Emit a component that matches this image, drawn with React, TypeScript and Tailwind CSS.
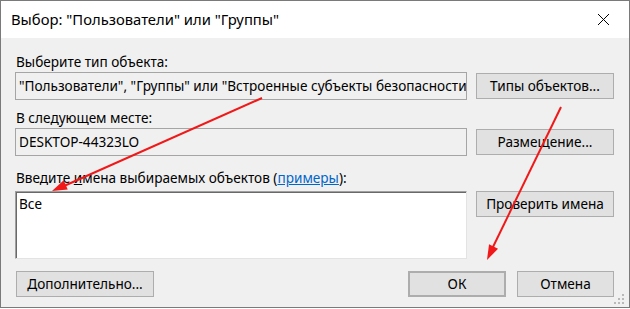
import React from "react";

function arrowHead(x1: number, y1: number, x2: number, y2: number, len = 15, half = 5) {
  const dx = x2 - x1;
  const dy = y2 - y1;
  const d = Math.hypot(dx, dy);
  const ux = dx / d;
  const uy = dy / d;
  const bx = x2 - ux * len;
  const by = y2 - uy * len;
  const px = -uy * half;
  const py = ux * half;
  return `${x2},${y2} ${bx + px},${by + py} ${bx - px},${by - py}`;
}

function Btn({ children, className = "" }: { children: React.ReactNode; className?: string }) {
  return (
    <div
      className={
        "h-[26px] flex items-center justify-center bg-[#e1e1e1] border border-[#adadad] text-[13.6px] text-black leading-none " +
        className
      }
    >
      {children}
    </div>
  );
}

export default function App() {
  const a1 = { x1: 262, y1: 98, x2: 52, y2: 191 };
  const a2 = { x1: 561, y1: 107, x2: 487, y2: 260 };
  return (
    <div className="relative w-[630px] h-[309px] bg-white overflow-hidden font-['Noto_Sans',sans-serif]">
      <div className="relative w-[630px] h-[308px] border border-[#7a7a7a] bg-[#f0f0f0] flex flex-col">
        {/* title bar */}
        <div className="h-[37px] bg-white flex items-center pl-[10px] relative">
          <span className="text-[14.8px] text-black">Выбор: "Пользователи" или "Группы"</span>
          <svg className="absolute left-[596px] top-[12px]" width="13" height="13" viewBox="0 0 13 13">
            <path d="M1 1 L12 12 M12 1 L1 12" stroke="#000" strokeWidth="1" fill="none" />
          </svg>
        </div>
        {/* body */}
        <div className="flex flex-col pl-[14px] pr-[15px] text-[13.6px] text-black">
          <div className="mt-[14px] h-[20px] leading-[20px] pl-[1px]">Выберите тип объекта:</div>
          <div className="flex items-start">
            <div className="w-[452px] h-[28px] border border-[#a5a5a5] flex items-center pl-[3px] overflow-hidden whitespace-nowrap">
              "Пользователи", "Группы" или "Встроенные субъекты безопасности"
            </div>
            <Btn className="ml-[9px] mt-[1px] w-[138px]">Типы объектов...</Btn>
          </div>
          <div className="mt-[8px] h-[20px] leading-[20px] pl-[1px]">В следующем месте:</div>
          <div className="flex items-start">
            <div className="w-[452px] h-[28px] border border-[#a5a5a5] flex items-center pl-[3px] overflow-hidden whitespace-nowrap">
              DESKTOP-44323LO
            </div>
            <Btn className="ml-[9px] mt-[1px] w-[138px]">Размещение...</Btn>
          </div>
          <div className="mt-[12px] h-[20px] leading-[20px] pl-[1px]">
            Введите <span className="underline">и</span>мена выбираемых объектов (
            <span className="text-[#0066cc] underline">примеры</span>):
          </div>
          <div className="mt-[3px] flex items-start">
            <div className="w-[452px] h-[68px] border border-t-[#a0a0a0] border-l-[#a0a0a0] border-r-[#e3e3e3] border-b-[#e3e3e3] shadow-[inset_1px_1px_0_#696969] bg-white pl-[3px] pt-[2px] leading-[20px]">
              Все
            </div>
            <Btn className="ml-[9px] w-[138px]">Проверить имена</Btn>
          </div>
          <div className="mt-[12px] flex items-start">
            <Btn className="ml-[1px] w-[138px]">Дополнительно...</Btn>
            <div className="flex-1" />
            <Btn className="w-[98px] border-2 border-[#0078d7]">ОК</Btn>
            <Btn className="ml-[11px] w-[97px]">Отмена</Btn>
          </div>
        </div>
        {/* grip */}
        <svg className="absolute right-[3px] bottom-[1px]" width="12" height="12" viewBox="0 0 12 12">
          <rect x="8" y="0" width="2" height="2" fill="#b9b9b9" />
          <rect x="4" y="4" width="2" height="2" fill="#b9b9b9" />
          <rect x="8" y="4" width="2" height="2" fill="#b9b9b9" />
          <rect x="0" y="8" width="2" height="2" fill="#b9b9b9" />
          <rect x="4" y="8" width="2" height="2" fill="#b9b9b9" />
          <rect x="8" y="8" width="2" height="2" fill="#b9b9b9" />
        </svg>
      </div>
      {/* annotations */}
      <svg className="absolute inset-0 pointer-events-none" width="630" height="309">
        <line x1={a1.x1} y1={a1.y1} x2={a1.x2 + 12} y2={a1.y2 - 5} stroke="#f01818" strokeWidth="2" />
        <polygon points={arrowHead(a1.x1, a1.y1, a1.x2, a1.y2)} fill="#f01818" />
        <line x1={a2.x1} y1={a2.y1} x2={a2.x2 + 5} y2={a2.y2 - 11} stroke="#f01818" strokeWidth="2" />
        <polygon points={arrowHead(a2.x1, a2.y1, a2.x2, a2.y2)} fill="#f01818" />
      </svg>
    </div>
  );
}
